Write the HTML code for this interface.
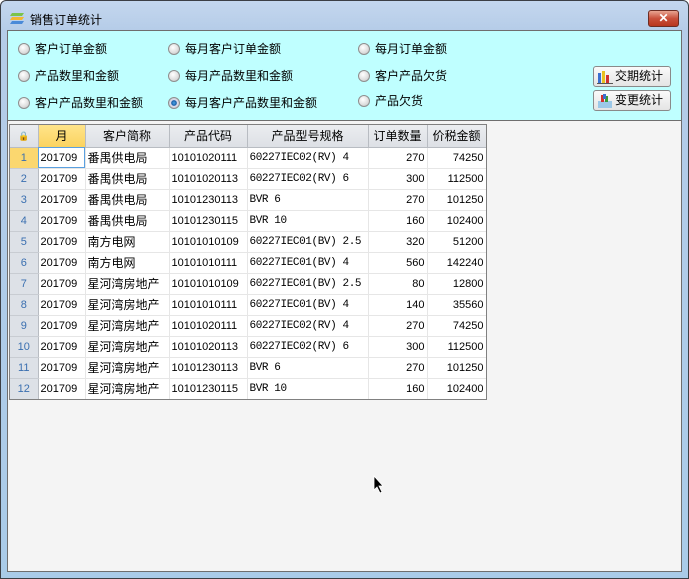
<!DOCTYPE html>
<html><head><meta charset="utf-8"><style>
*{margin:0;padding:0;box-sizing:border-box}
body{width:689px;height:579px;overflow:hidden;background:#fff;font-family:"Liberation Sans","Noto Sans CJK SC",sans-serif;font-size:12px;color:#000;position:relative}
.win{position:absolute;left:0;top:0;width:689px;height:579px;border:1px solid #3c3f45;border-radius:6px 6px 0 0;background:linear-gradient(#c4d7ee,#b5cce8 30px,#a9cbe8);}
.title{position:absolute;left:30px;top:11px;font-size:12px}
.close{position:absolute;left:648px;top:10px;width:31px;height:17px;border:1px solid #6d2d23;border-radius:3px;background:linear-gradient(#e8a592,#c9503b 50%,#b8361f);color:#fff;font-weight:bold;text-align:center;line-height:15px;font-size:12px}
.client{position:absolute;left:7px;top:30px;width:675px;height:542px;border:1px solid #6e6e6e;background:#f4f4f4}
.panel{position:absolute;left:8px;top:31px;width:673px;height:90px;background:#bfffff;border-bottom:1px solid #6e6e6e}
.r{position:absolute;font-size:12px;line-height:14px;white-space:nowrap}
.r i{display:inline-block;width:12px;height:12px;border-radius:50%;border:1px solid #8e8f8f;background:radial-gradient(circle at 40% 35%,#fff,#ddd 60%,#bbb);vertical-align:-2px;margin-right:5px}
.r i.on{background:radial-gradient(circle,#4aa6e8 0,#1a5fa8 35%,#dde 45%,#bbb)}
.btn{position:absolute;left:593px;width:78px;height:21px;border:1px solid #8a8a8a;border-radius:3px;background:linear-gradient(#fafafa,#e4e4e4);font-size:12px;line-height:19px;padding-left:21px}
.grid{position:absolute;left:9px;top:124px;width:478px;height:276px;border:1px solid #808080;background:#f4f4f4;overflow:hidden}
table{border-collapse:collapse;table-layout:fixed;width:476px;position:absolute;left:0;top:0;font-size:11px;background:#fff}
td,th{height:21px;line-height:20px;border-right:1px solid #e6e6e6;border-bottom:1px solid #e6e6e6;padding:0 2px;white-space:nowrap;overflow:hidden;font-weight:normal;vertical-align:middle}
th{height:22px;background:linear-gradient(#ebedf0,#dde0e5);border-right:1px solid #b8bcc2;border-bottom:1px solid #b8bcc2;text-align:center;font-size:12px}
td.n{background:#dde1e7;color:#3a6fb0;text-align:center;border-right:1px solid #b8bcc2;border-bottom:1px solid #c8ccd2}
td.n1{background:#fbd76f}
th.m{background:linear-gradient(#ffe48a,#fbd35f)}
td.num{text-align:right}
td.c{font-size:12px}
.mono{font-family:"Liberation Mono","Noto Sans CJK SC",monospace;font-size:11px;letter-spacing:-0.4px}
</style></head><body>
<div class="win"></div>
<svg style="position:absolute;left:10px;top:10px" width="16" height="14"><path d="M2 3h12l-2 3H0z" fill="#7cc34a"/><path d="M2 7h12l-2 3H0z" fill="#f2b632"/><path d="M2 11h12l-2 3H0z" fill="#4a8ad8"/></svg>
<div class="title">销售订单统计</div>
<div class="close">✕</div>
<div class="client"></div>
<div class="panel"></div>
<div class="r" style="left:18px;top:42px"><i></i>客户订单金额</div>
<div class="r" style="left:168px;top:42px"><i></i>每月客户订单金额</div>
<div class="r" style="left:358px;top:42px"><i></i>每月订单金额</div>
<div class="r" style="left:18px;top:69px"><i></i>产品数里和金额</div>
<div class="r" style="left:168px;top:69px"><i></i>每月产品数里和金额</div>
<div class="r" style="left:358px;top:69px"><i></i>客户产品欠货</div>
<div class="r" style="left:18px;top:96px"><i></i>客户产品数里和金额</div>
<div class="r" style="left:168px;top:96px"><i class="on"></i>每月客户产品数里和金额</div>
<div class="r" style="left:358px;top:94px"><i></i>产品欠货</div>
<div class="btn" style="top:66px"><svg style="position:absolute;left:3px;top:2px" width="16" height="16"><rect x="1" y="4" width="3" height="11" fill="#3a6fd0"/><rect x="5" y="2" width="3" height="13" fill="#e8c020"/><rect x="9" y="6" width="3" height="9" fill="#d03030"/><rect x="0" y="14" width="16" height="1" fill="#555"/></svg>交期统计</div>
<div class="btn" style="top:90px"><svg style="position:absolute;left:3px;top:2px" width="16" height="16"><rect x="1" y="8" width="14" height="7" fill="#9cc8e8"/><rect x="4" y="2" width="3" height="7" fill="#d03030"/><rect x="8" y="3" width="3" height="6" fill="#3a9a3a"/><rect x="6" y="1" width="3" height="5" fill="#3a6fd0"/></svg>变更统计</div>
<div class="grid">
<table>
<colgroup><col style="width:28px"><col style="width:47px"><col style="width:84px"><col style="width:78px"><col style="width:121px"><col style="width:59px"><col style="width:59px"></colgroup>
<tr><th style="font-size:9px;color:#3a6fb0">🔒</th><th class="m">月</th><th>客户简称</th><th>产品代码</th><th>产品型号规格</th><th>订单数量</th><th>价税金额</th></tr>
<tr><td class="n n1">1</td><td style="outline:1px solid #5aa0e0;outline-offset:-1px">201709</td><td class="c">番禺供电局</td><td>10101020111</td><td class="mono">60227IEC02(RV) 4</td><td class="num">270</td><td class="num">74250</td></tr>
<tr><td class="n">2</td><td>201709</td><td class="c">番禺供电局</td><td>10101020113</td><td class="mono">60227IEC02(RV) 6</td><td class="num">300</td><td class="num">112500</td></tr>
<tr><td class="n">3</td><td>201709</td><td class="c">番禺供电局</td><td>10101230113</td><td class="mono">BVR 6</td><td class="num">270</td><td class="num">101250</td></tr>
<tr><td class="n">4</td><td>201709</td><td class="c">番禺供电局</td><td>10101230115</td><td class="mono">BVR 10</td><td class="num">160</td><td class="num">102400</td></tr>
<tr><td class="n">5</td><td>201709</td><td class="c">南方电网</td><td>10101010109</td><td class="mono">60227IEC01(BV) 2.5</td><td class="num">320</td><td class="num">51200</td></tr>
<tr><td class="n">6</td><td>201709</td><td class="c">南方电网</td><td>10101010111</td><td class="mono">60227IEC01(BV) 4</td><td class="num">560</td><td class="num">142240</td></tr>
<tr><td class="n">7</td><td>201709</td><td class="c">星河湾房地产</td><td>10101010109</td><td class="mono">60227IEC01(BV) 2.5</td><td class="num">80</td><td class="num">12800</td></tr>
<tr><td class="n">8</td><td>201709</td><td class="c">星河湾房地产</td><td>10101010111</td><td class="mono">60227IEC01(BV) 4</td><td class="num">140</td><td class="num">35560</td></tr>
<tr><td class="n">9</td><td>201709</td><td class="c">星河湾房地产</td><td>10101020111</td><td class="mono">60227IEC02(RV) 4</td><td class="num">270</td><td class="num">74250</td></tr>
<tr><td class="n">10</td><td>201709</td><td class="c">星河湾房地产</td><td>10101020113</td><td class="mono">60227IEC02(RV) 6</td><td class="num">300</td><td class="num">112500</td></tr>
<tr><td class="n">11</td><td>201709</td><td class="c">星河湾房地产</td><td>10101230113</td><td class="mono">BVR 6</td><td class="num">270</td><td class="num">101250</td></tr>
<tr><td class="n">12</td><td>201709</td><td class="c">星河湾房地产</td><td>10101230115</td><td class="mono">BVR 10</td><td class="num">160</td><td class="num">102400</td></tr>
</table></div>
<svg style="position:absolute;left:373px;top:475px" width="12" height="18"><path d="M1 1v14l3-3 3 6 2-1-3-6h4z" fill="#000" stroke="#fff" stroke-width="0.8"/></svg>
</body></html>
